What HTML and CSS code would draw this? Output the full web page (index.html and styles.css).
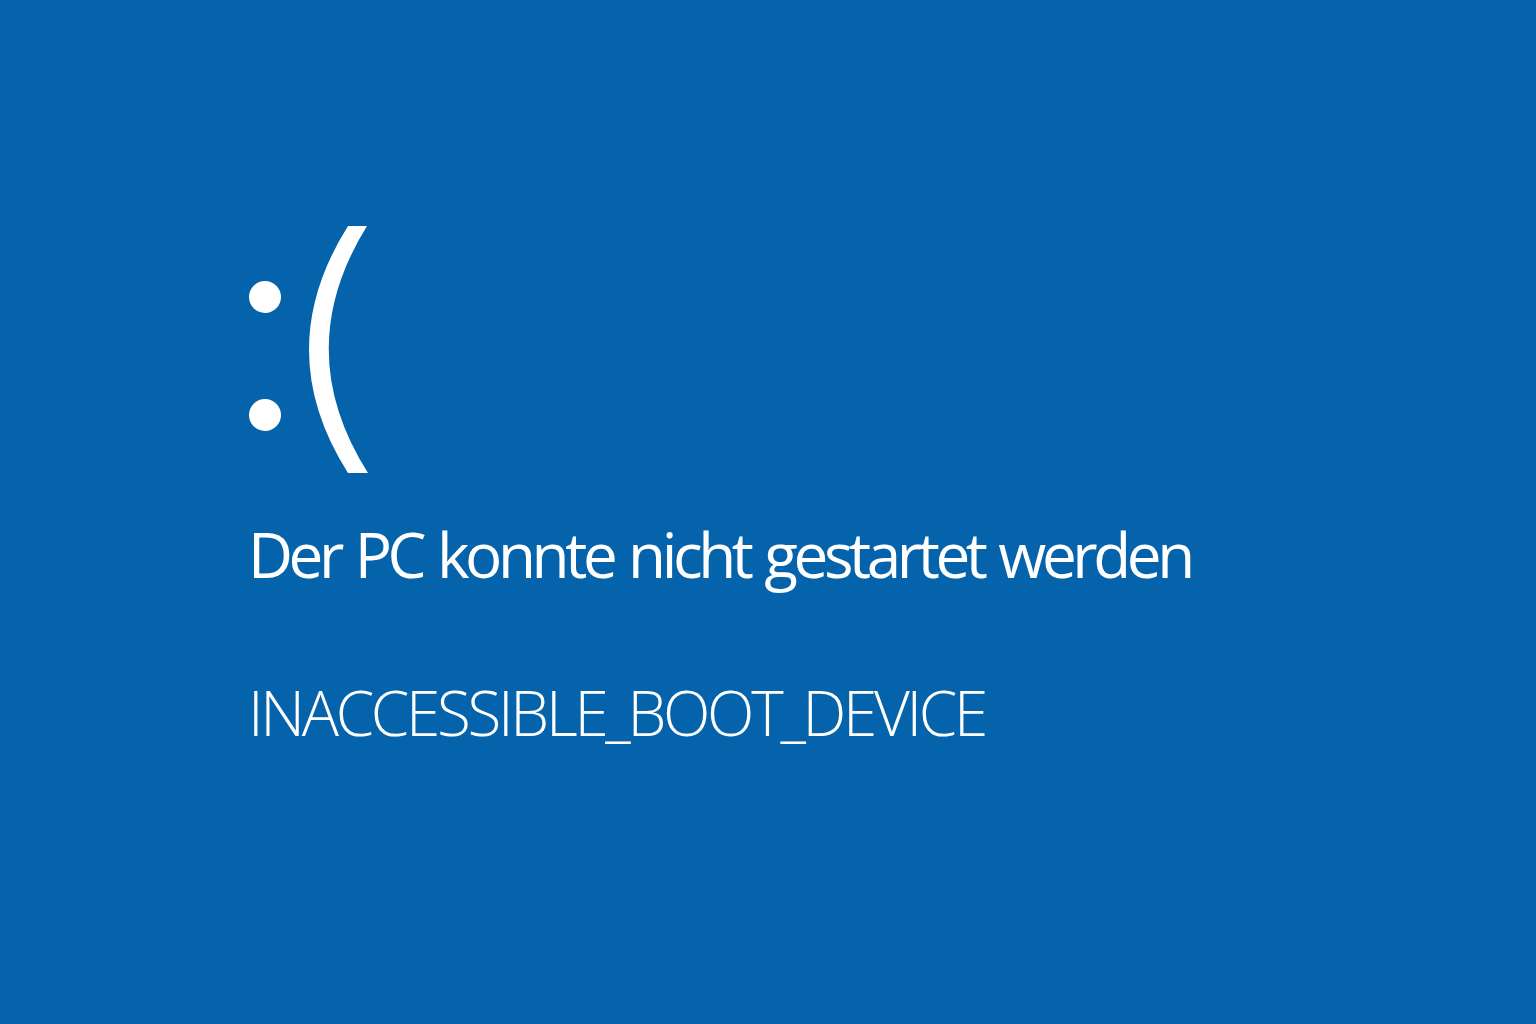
FILE: index.html
```html
<!DOCTYPE html>
<html lang="de">
<head>
<meta charset="utf-8">
<title>Der PC konnte nicht gestartet werden</title>
<link rel="stylesheet" href="styles.css">
</head>
<body>
<main class="screen">
  <svg class="face" viewBox="240 220 140 260" width="140" height="260" aria-label=":(">
    <circle cx="265" cy="297" r="16" fill="#fff"/>
    <circle cx="265" cy="415" r="16" fill="#fff"/>
    <path d="M348 226 Q270 350 348 473 L368 473 Q290 350 367 226 Z" fill="#fff"/>
  </svg>
  <h1 class="title">Der PC konnte nicht gestartet werden</h1>
  <p class="code">INACCESSIBLE_BOOT_DEVICE</p>
</main>
</body>
</html>
```
FILE: styles.css
```css
html, body {
  margin: 0;
  padding: 0;
  height: 100%;
  background: #0563ab;
}
.screen {
  box-sizing: border-box;
  height: 100%;
  padding: 220px 0 0 0;
  display: flex;
  flex-direction: column;
  align-items: flex-start;
  color: #fff;
  font-family: "Open Sans", "Noto Sans", sans-serif;
}
.face {
  display: block;
  margin-left: 240px;
}
.title {
  margin: 34px 0 0 248px;
  font-size: 62px;
  font-weight: 400;
  letter-spacing: -4.4px;
  word-spacing: 3px;
  line-height: 80px;
  white-space: nowrap;
}
.code {
  margin: 78px 0 0 248px;
  font-size: 62px;
  font-weight: 300;
  letter-spacing: -3.3px;
  line-height: 80px;
  white-space: nowrap;
}
```
